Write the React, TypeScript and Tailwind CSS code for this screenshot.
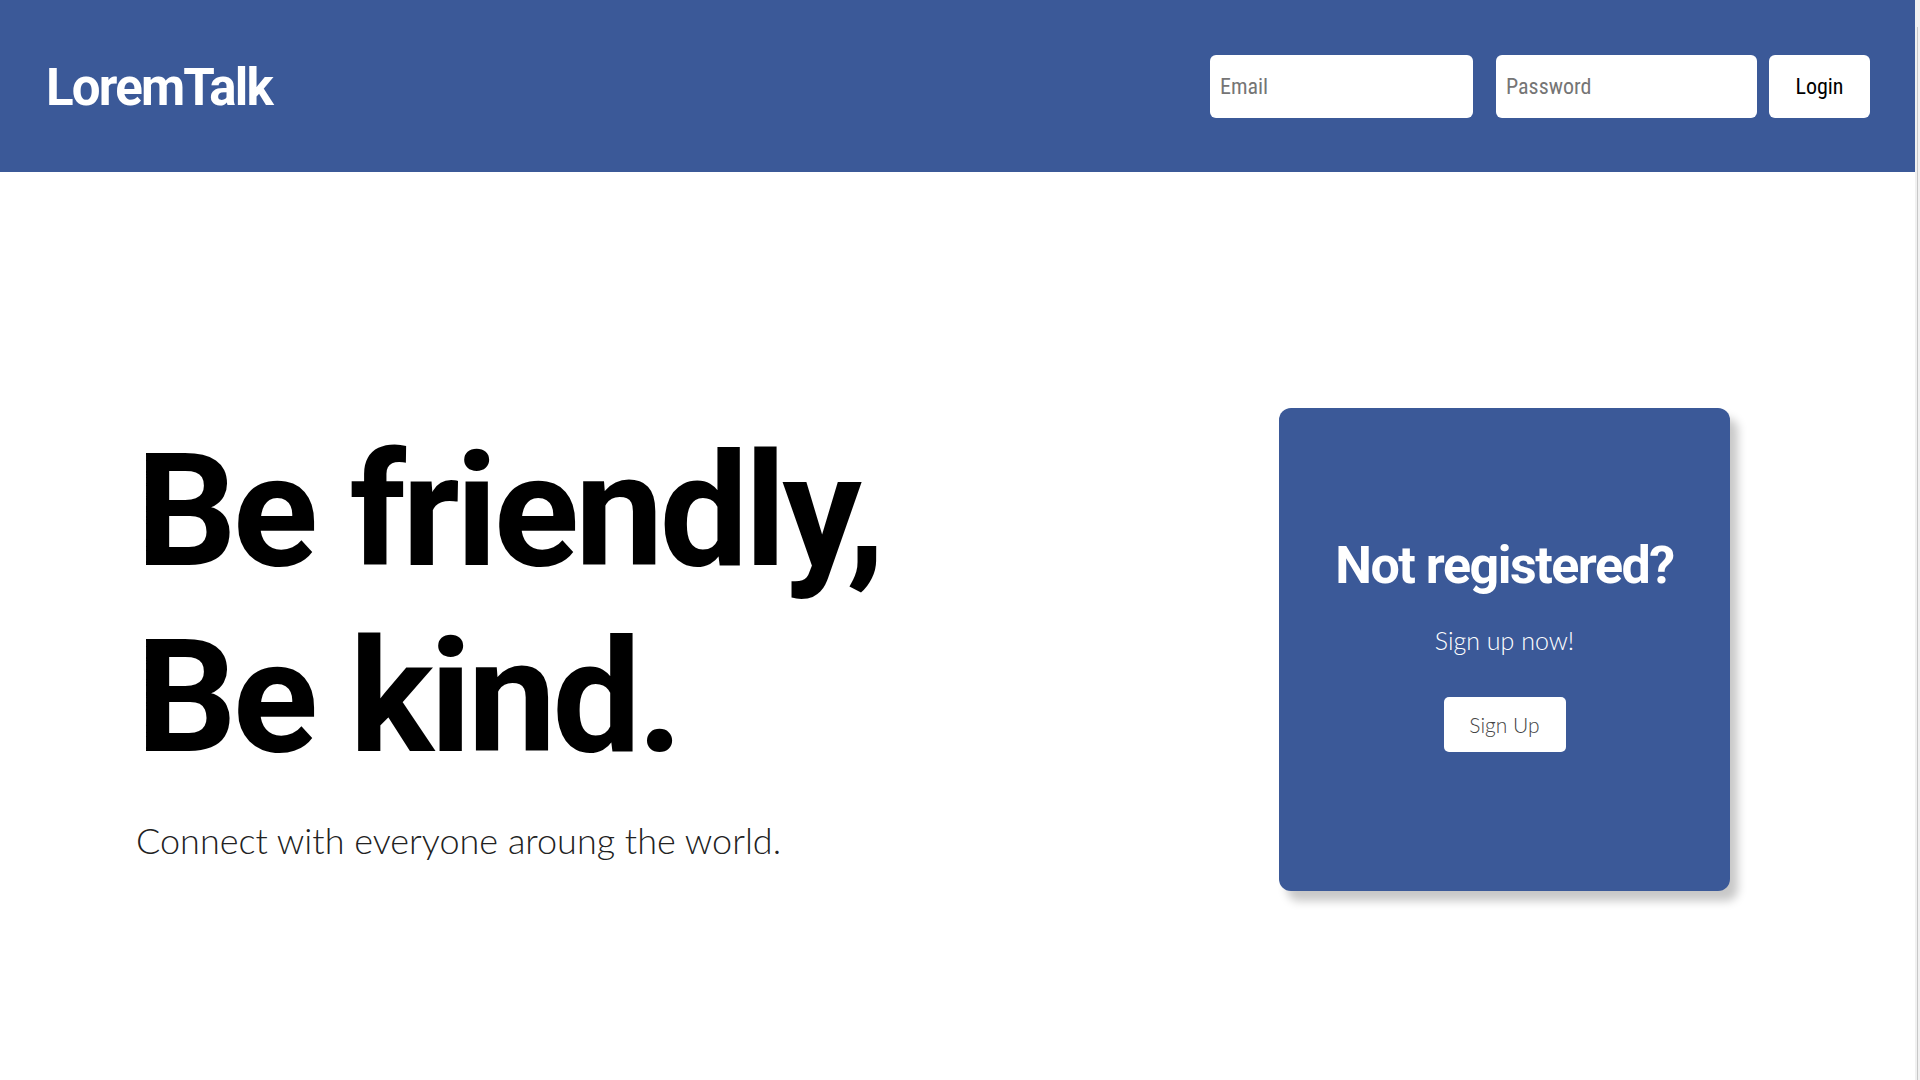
import { useState } from "react";

export default function App() {
  const [email, setEmail] = useState("");
  const [password, setPassword] = useState("");

  return (
    <div className="flex w-full h-[1080px] overflow-hidden bg-white">
      <div className="flex flex-col w-[1915px] shrink-0">
        <header className="flex items-center justify-between h-[172px] bg-[#3b5998] pl-[46px] pr-[45px]">
          <h1 className="text-white text-[51px] font-bold font-['Roboto',sans-serif] tracking-[-1.8px] leading-none pt-[2px]">
            LoremTalk
          </h1>
          <div className="flex items-center">
            <input
              type="email"
              placeholder="Email"
              value={email}
              onChange={(e) => setEmail(e.target.value)}
              className="w-[263px] h-[63px] rounded-[6px] bg-white px-[10px] text-[22px] font-['Liberation_Sans_Narrow','Roboto_Condensed',Roboto,sans-serif] text-gray-800 placeholder:text-[#757575] outline-none"
            />
            <input
              type="password"
              placeholder="Password"
              value={password}
              onChange={(e) => setPassword(e.target.value)}
              className="ml-[23px] w-[261px] h-[63px] rounded-[6px] bg-white px-[10px] text-[22px] font-['Liberation_Sans_Narrow','Roboto_Condensed',Roboto,sans-serif] text-gray-800 placeholder:text-[#757575] outline-none"
            />
            <button className="ml-[12px] w-[101px] h-[63px] rounded-[6px] bg-white text-[22px] font-['Liberation_Sans_Narrow','Roboto_Condensed',Roboto,sans-serif] text-black">
              Login
            </button>
          </div>
        </header>

        <main className="flex items-start justify-between pl-[136px] pr-[185px] pt-[236px]">
          <div className="flex flex-col">
            <div className="font-['Roboto',sans-serif] font-bold text-[158px] leading-[186px] tracking-[-4px] text-black pt-[10px]">
              <div>Be friendly,</div>
              <div>Be kind.</div>
            </div>
            <p className="mt-[32px] font-['Lato',sans-serif] font-light text-[36px] text-[#222] leading-none">
              Connect with everyone aroung the world.
            </p>
          </div>

          <div className="flex flex-col items-center w-[451px] h-[483px] rounded-[12px] bg-[#3b5998] shadow-[8px_10px_10px_rgba(0,0,0,0.22)] pt-[132px]">
            <h2 className="text-white font-['Roboto',sans-serif] font-bold text-[52px] tracking-[-1.5px] leading-none">
              Not registered?
            </h2>
            <p className="mt-[36px] text-white font-['Lato',sans-serif] font-light text-[25px] leading-none">
              Sign up now!
            </p>
            <button className="mt-[44px] w-[122px] h-[55px] rounded-[5px] bg-white text-[21px] text-[#444] font-['Lato',sans-serif] font-light">
              Sign Up
            </button>
          </div>
        </main>
      </div>
      <div className="w-[5px] shrink-0 bg-[#f1f1f1] pt-[27px] pl-[2px]">
        <div className="w-[1px] h-full bg-[#c8c8c8]"></div>
      </div>
    </div>
  );
}
